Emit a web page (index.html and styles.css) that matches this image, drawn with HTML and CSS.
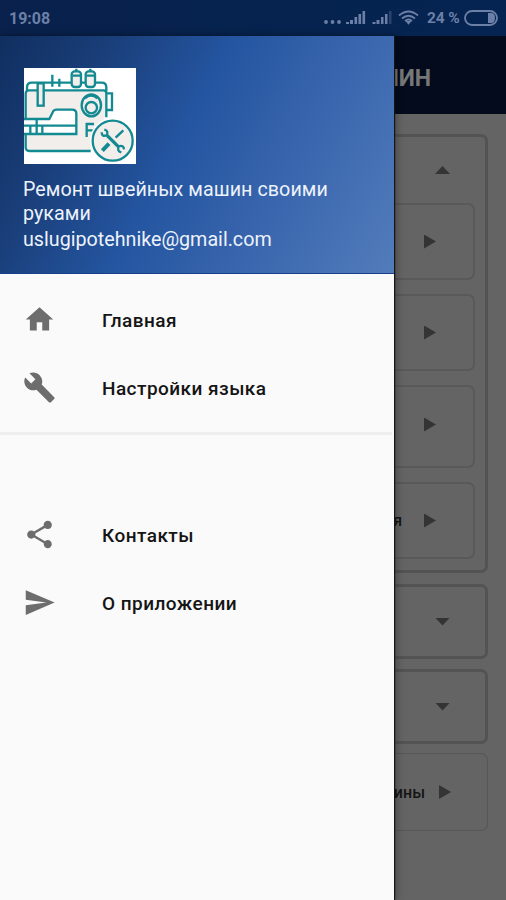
FILE: index.html
```html
<!DOCTYPE html>
<html lang="ru">
    <head>
        <meta charset="utf-8">
        <meta name="viewport" content="width=device-width, initial-scale=1.0">
        <title>Ремонт швейных машин</title>
        <link rel="stylesheet" href="styles.css">
    </head>
    <body>
        <div class="statusbar">
            <span class="time">19:08</span>
            <svg class="status-icons" width="104" height="20" viewBox="0 0 104 20">
                <g class="fill">
                    <circle cx="4" cy="14" r="1.9"/><circle cx="10.5" cy="14" r="1.9"/><circle cx="17" cy="14" r="1.9"/>
                    <path d="M24 16v-2h3v2zM28 16v-4h3v4zM32.5 16v-7h2.6v7zM36.5 16v-10h2.6v10zM40.5 16v-13h2.6v13z"/>
                    <path d="M50.500 16v-2h3v2zM54.500 16v-4h3v4zM59 16v-7h2.500v7zM63 16v-10h2.500v10z"/>
                    <path class="off" d="M67 16v-13h2.500v13z"/>
                    <path d="M83.500 13l3 0 3 0-3 3.700z"/>
                </g>
                <path class="wave" d="M77 7.500q9.500-8 19 0M80 10.500q6.500-5.500 13 0M83 13q3.500-3 7 0"/>
            </svg>
            <span class="percent">24 %</span>
            <svg width="34" height="16" viewBox="0 0 34 16">
                <rect class="battery" x="1" y="1" width="32" height="14" rx="7"/>
                <path class="fill" d="M24 3h3q4 0 4 5t-4 5h-3z"/>
            </svg>
        </div>

        <div class="screen">
            <aside class="drawer">
                <header class="profile">
                    <svg class="logo" viewBox="0 0 336 288">
                        <rect width="336" height="288" fill="#fff"/>
                        <path class="body" d="M4 75q0-9 9-9h220q12 0 12 12v60l-40 110H17q-13 0-13-13z"/>
                        <path class="white" d="M4 153h72l14-27h55q12 0 12 12v60H4z"/>
                        <path class="line" d="M5 153V77q0-10 10-10h223q9 0 9 9v72M9 67v-9q0-14 14-14h210q14 0 14 14v12M85 20v36M106 32v24M5 198v40q0 11 11 11h184M0 153h76l12-24q3-4 9-4h47q13 0 13 12v61H0M0 173h155M38 154v43M19 173v24M55 173v24M248 76h16v50h-16M188 207V168h22M188 187h18"/>
                        <g class="line body">
                            <rect x="41" y="46" width="18" height="67"/>
                            <rect x="143" y="10" width="28" height="47" rx="9"/>
                            <rect x="185" y="10" width="28" height="47" rx="9"/>
                            <ellipse cx="202" cy="112" rx="29" ry="33"/>
                            <circle cx="202" cy="119" r="17"/>
                        </g>
                        <path class="line" d="M145 23h24M187 23h24M157 2v8M199 2v8M183 91q18-17 37 0"/>
                        <circle class="badge" cx="266" cy="218" r="68"/>
                        <circle class="line body" cx="266" cy="218" r="60"/>
                        <path class="line" d="M298 187l-23 22"/>
                        <path class="tool" d="M255 227l-20 21"/>
                        <path class="thick" d="M249 202l34 34"/>
                        <path class="line" d="M233 193q0 14 15 9q7-14-7-17M300 244q-1-14-16-9q-6 14 8 18"/>
                    </svg>
                    <div class="name">Ремонт швейных машин своими руками</div>
                    <div class="email">uslugipotehnike@gmail.com</div>
                </header>
                <nav>
                    <a class="item">
                        <svg class="icon" viewBox="0 0 24 24"><path d="M10 20v-6h4v6h5v-8h3L12 3 2 12h3v8z"/></svg>
                        <span>Главная</span>
                    </a>
                    <a class="item settings">
                        <svg class="icon" viewBox="0 0 24 24"><path d="M22.700 19l-9.100-9.100c.9-2.300.4-5-1.500-6.900-2-2-5-2.400-7.400-1.300L9 6 6 9 1.600 4.700C.4 7.100.9 10.100 2.900 12.100c1.900 1.900 4.600 2.400 6.900 1.500l9.100 9.100c.4.4 1 .4 1.400 0l2.300-2.300c.5-.4.5-1.100.1-1.400z"/></svg>
                        <span>Настройки языка</span>
                    </a>
                    <hr>
                    <a class="item contacts">
                        <svg class="icon" viewBox="0 0 24 24"><path d="M18 16.080c-.76 0-1.440.3-1.960.77L8.910 12.700c.05-.23.09-.46.09-.7s-.04-.47-.09-.7l7.050-4.110c.54.5 1.250.81 2.040.81 1.660 0 3-1.340 3-3s-1.340-3-3-3-3 1.340-3 3c0 .24.04.47.09.7L8.040 9.810C7.500 9.310 6.790 9 6 9c-1.660 0-3 1.340-3 3s1.340 3 3 3c.79 0 1.500-.31 2.040-.81l7.120 4.160c-.05.21-.08.43-.08.65 0 1.610 1.310 2.920 2.920 2.920s2.920-1.310 2.920-2.920-1.310-2.920-2.920-2.920z"/></svg>
                        <span>Контакты</span>
                    </a>
                    <a class="item about">
                        <svg class="icon" viewBox="0 0 24 24"><path d="M2 21l21-9L2 3v7l15 2-15 2z"/></svg>
                        <span>О приложении</span>
                    </a>
                </nav>
            </aside>

            <main>
                <header class="toolbar"><h1>ШИН</h1></header>
                <div class="list">
                    <section class="group open">
                        <div class="head"><i class="up"></i></div>
                        <div class="card"><i class="right"></i></div>
                        <div class="card"><i class="right"></i></div>
                        <div class="card tall"><i class="right"></i></div>
                        <div class="card"><span>я</span><i class="right"></i></div>
                    </section>
                    <section class="group closed"><i class="down"></i></section>
                    <section class="group closed"><i class="down"></i></section>
                    <div class="card last"><span>ины</span><i class="right"></i></div>
                </div>
            </main>
        </div>
    </body>
</html>
```
FILE: styles.css
```css
* {
    box-sizing: border-box;
}
body {
    margin: 0;
    height: 900px;
    overflow: hidden;
    display: flex;
    flex-direction: column;
    font-family: Roboto, "Liberation Sans", sans-serif;
}

/* Status bar */
.statusbar {
    height: 36px;
    flex: none;
    display: flex;
    align-items: center;
    padding: 0 8px 0 9px;
    background: linear-gradient(90deg, #09214c, #06234f 50%, #062451);
    color: #6c80a7;
    font-size: 16px;
    font-weight: 700;
}
.time {
    margin-right: auto;
}
.percent {
    width: 37px;
    margin-left: 1px;
    white-space: nowrap;
    font-size: 15.5px;
    letter-spacing: -0.1px;
}
.fill {
    fill: #6c80a7;
}
.off {
    opacity: 0.35;
}
.wave, .battery {
    fill: none;
    stroke: #6c80a7;
    stroke-width: 1.8;
}

.screen {
    flex: 1;
    display: flex;
    min-height: 0;
}

/* Drawer */
.drawer {
    width: 394px;
    flex: none;
    position: relative;
    z-index: 1;
    background: #fafafa;
    box-shadow: 1px 0 1px #151515, 2px 0 8px rgba(0, 0, 0, 0.35);
}
.profile {
    height: 238px;
    padding: 32px 23px 0;
    background: linear-gradient(118deg, #102f60 0%, #193d77 20%, #2455a0 45%, #3b67af 72%, #527cba 100%);
    color: #edf2fb;
    font-size: 19.7px;
    border-bottom: 1px solid #183f8b;
}
.logo {
    display: block;
    width: 112px;
    height: 96px;
    margin-left: 1px;
}
.name {
    margin-top: 14px;
    width: 320px;
    line-height: 24px;
    letter-spacing: 0.05px;
}
.email {
    margin-top: 2px;
    line-height: 24px;
}
.line, .tool, .thick {
    fill: none;
    stroke: #138a92;
    stroke-width: 7;
}
.body {
    fill: #f2eeeb;
}
.white {
    fill: #fff;
}
.badge {
    fill: #fff;
}
.tool {
    stroke-width: 12;
}
.thick {
    stroke-width: 10;
}

nav {
    padding-top: 13px;
}
.item {
    height: 67.5px;
    display: flex;
    align-items: center;
    padding-left: 23px;
    color: #151515;
    font-size: 19px;
    font-weight: 500;
    letter-spacing: 0.45px;
}
.icon {
    width: 33px;
    height: 33px;
    margin: -2px 46px 0 0;
    fill: #6d6d6d;
}
hr {
    width: 392px;
    height: 3px;
    margin: 10px 0 67px;
    border: 0;
    background: #eee;
}

/* Dimmed app screen */
main {
    flex: 1;
    min-width: 0;
    overflow: hidden;
    background: #646464;
}
.toolbar {
    height: 78px;
    display: flex;
    align-items: center;
    justify-content: flex-end;
    padding-right: 75px;
    background: #030b1d;
}
h1 {
    margin: 6px 0 0;
    color: #777;
    font-size: 23px;
}
.list {
    padding: 20px 18px 0 0;
}
.group {
    border: 3px solid #535353;
    border-left: 0;
    border-radius: 0 7px 7px 0;
}
.open {
    height: 439px;
    padding-right: 10px;
}
.head {
    height: 66px;
    display: flex;
    align-items: center;
    justify-content: flex-end;
    padding-right: 25px;
}
.card {
    height: 77px;
    margin-bottom: 14px;
    display: flex;
    align-items: center;
    justify-content: flex-end;
    gap: 22px;
    padding-right: 37px;
    border: 2px solid #595959;
    border-left: 0;
    border-radius: 0 7px 7px 0;
    color: #151515;
    font-size: 16px;
    font-weight: 500;
}
.tall {
    height: 83px;
    padding-bottom: 4px;
}
.closed {
    height: 75px;
    margin-top: 11px;
    display: flex;
    align-items: center;
    justify-content: flex-end;
    padding-right: 35px;
}
.closed + .closed {
    margin-top: 10px;
}
.last {
    height: 78px;
    margin-top: 9px;
    gap: 14px;
    padding-right: 36px;
    border: 1px solid #575757;
    border-left: 0;
}
.up, .down, .right {
    flex: none;
    background: #343434;
}
.up, .down {
    width: 15px;
    height: 8px;
}
.up {
    clip-path: polygon(50% 0, 100% 100%, 0 100%);
}
.down {
    clip-path: polygon(0 0, 100% 0, 50% 100%);
}
.right {
    width: 12px;
    height: 14px;
    clip-path: polygon(0 0, 100% 50%, 0 100%);
}
```
